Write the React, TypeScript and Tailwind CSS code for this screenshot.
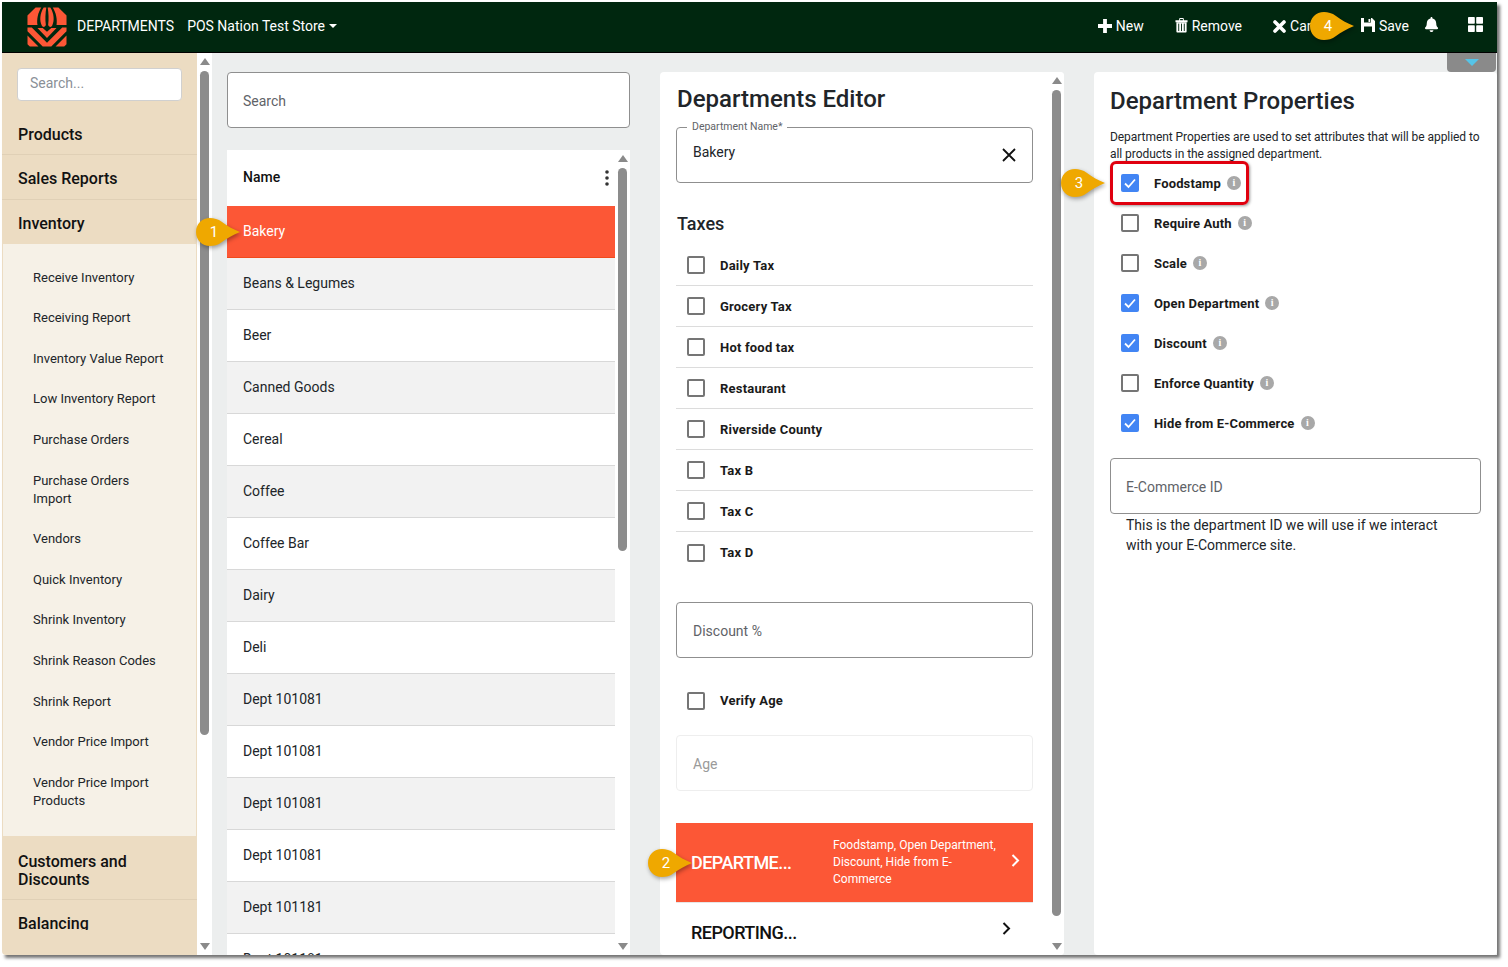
import React from "react";
import { FaBell } from "react-icons/fa";

function Logo() {
  return (
    <svg width="40" height="40" viewBox="0 0 42 42" className="shrink-0">
      <g fill="#fc5736">
        <path d="M9 0.500 L15 0.500 C11.500 6 10 13 11 19 L0.500 19 L0.500 9 Z" />
        <path d="M33 0.500 L27 0.500 C30.500 6 32 13 31 19 L41.500 19 L41.500 9 Z" />
        <path d="M17.500 0.500 C13.500 7 13 14 15.500 19.500 C17 22 19 21 19.800 19 C19 13 19.300 6 20.300 0.500 Z" />
        <path d="M24.500 0.500 C28.500 7 29 14 26.500 19.500 C25 22 23 21 22.200 19 C23 13 22.700 6 21.700 0.500 Z" />
        <path d="M11 22 L16.500 22 L21 26 L25.500 22 L31 22 L21 32.500 Z" />
        <path d="M0.500 21.500 L5 21.500 L21 37.500 L37 21.500 L41.500 21.500 L41.500 25.500 L25.500 41.500 L16.500 41.500 L0.500 25.500 Z" />
        <path d="M0.500 30 L12 41.500 L3 41.500 L0.500 39 Z" />
        <path d="M41.500 30 L30 41.500 L39 41.500 L41.500 39 Z" />
      </g>
    </svg>
  );
}

function PlusIcon() {
  return (
    <svg width="14" height="14" viewBox="0 0 14 14" className="shrink-0">
      <path d="M7 0 V14 M0 7 H14" stroke="#fff" strokeWidth="3.800" />
    </svg>
  );
}

function TimesIcon() {
  return (
    <svg width="13" height="13" viewBox="0 0 13 13" className="shrink-0">
      <path d="M2 2 L11 11 M11 2 L2 11" stroke="#fff" strokeWidth="3.600" strokeLinecap="round" />
    </svg>
  );
}

function TrashIcon() {
  return (
    <svg width="13" height="16" viewBox="0 0 14 16" className="shrink-0 -mt-[3px]">
      <path d="M0.500 3 H13.500 V5 H0.500 Z M4.500 3 V1.500 Q4.500 0.500 5.500 0.500 H8.500 Q9.500 0.500 9.500 1.500 V3 H8.500 V1.500 H5.500 V3 Z" fill="#fff" />
      <path d="M1.500 5 H12.500 V15 Q12.500 16 11.500 16 H2.500 Q1.500 16 1.500 15 Z" fill="#fff" />
      <path d="M4 6.500 V14.500 M7 6.500 V14.500 M10 6.500 V14.500" stroke="#00270f" strokeWidth="1" />
    </svg>
  );
}

function SaveIcon() {
  return (
    <svg width="14" height="14" viewBox="0 0 14 14" className="shrink-0 -mt-[3px]">
      <path fillRule="evenodd" d="M0 0 H11 L14 3 V14 H0 Z M3 0 V4.500 H10 V0 Z M3 8.500 V14 H11 V8.500 Z" fill="#fff" />
      <rect x="7.500" y="1" width="1.800" height="3" fill="#fff" />
    </svg>
  );
}

function GridIcon() {
  return (
    <svg width="15" height="15" viewBox="0 0 15 15" className="shrink-0">
      <rect x="0" y="0" width="6.800" height="6.800" rx="0.800" fill="#fff" />
      <rect x="8.200" y="0" width="6.800" height="6.800" rx="0.800" fill="#fff" />
      <rect x="0" y="8.200" width="6.800" height="6.800" rx="0.800" fill="#fff" />
      <rect x="8.200" y="8.200" width="6.800" height="6.800" rx="0.800" fill="#fff" />
    </svg>
  );
}

function Callout({ n, className }: { n: number; className: string }) {
  return (
    <div className={`absolute w-[46px] h-[30px] ${className}`}>
      <svg width="46" height="30" viewBox="0 0 46 30" className="absolute left-0 top-0 drop-shadow-[1px_2px_2px_rgba(0,0,0,0.35)]">
        <path d="M15 1 C19 1 23 2 27 5 C32 9 38 12 45 15 C38 18 32 21 27 25 C23 28 19 29 15 29 C7 29 1 23 1 15 C1 7 7 1 15 1 Z" fill="#efa800" />
      </svg>
      <span className="absolute left-0 top-0 w-[38px] h-[30px] flex items-center justify-center text-white text-[15px] leading-none">{n}</span>
    </div>
  );
}

function Box({ checked }: { checked?: boolean }) {
  return checked ? (
    <span className="w-[18px] h-[18px] rounded-[2px] bg-[#4285f4] flex items-center justify-center shrink-0">
      <svg width="14" height="14" viewBox="0 0 14 14">
        <path d="M2 7.500 L5.500 11 L12 3.500" fill="none" stroke="#fff" strokeWidth="1.800" />
      </svg>
    </span>
  ) : (
    <span className="w-[18px] h-[18px] rounded-[2px] border-2 border-[#757575] bg-white shrink-0" />
  );
}

function Info() {
  return (
    <span className="w-[14px] h-[14px] rounded-full bg-[#a8a8a8] text-white text-[10px] font-bold leading-none flex items-center justify-center shrink-0" style={{ fontFamily: "'Liberation Serif', serif" }}>i</span>
  );
}

function Check({ label, checked, info }: { label: string; checked?: boolean; info?: boolean }) {
  return (
    <div className="flex items-center h-[40px] pl-[11px]">
      <Box checked={checked} />
      <span className="ml-[15px] mt-[2px] text-[13px] font-bold tracking-[0.15px] text-[#1a1a1a]">{label}</span>
      {info && <span className="ml-[6px]"><Info /></span>}
    </div>
  );
}

function TaxRow({ label, last }: { label: string; last?: boolean }) {
  return (
    <div className={`flex items-center h-[41px] pl-[11px] ${last ? "" : "border-b border-[#dcdcdc]"}`}>
      <Box />
      <span className={`ml-[15px] text-[13px] font-bold tracking-[0.2px] text-[#1a1a1a] ${last ? "" : "mt-[2px]"}`}>{label}</span>
    </div>
  );
}

function Field({ text, className = "" }: { text: string; className?: string }) {
  return (
    <div className={`h-[56px] rounded-[4px] border border-[#8f8f8f] bg-white flex items-center text-[14px] text-[#5f6368] ${className}`}>{text}</div>
  );
}

function Scroll({ thumb, className = "" }: { thumb: string; className?: string }) {
  return (
    <div className={`w-[15px] shrink-0 bg-white flex flex-col items-center ${className}`}>
      <svg width="10" height="7" viewBox="0 0 10 7" className="mt-[5px] shrink-0"><path d="M5 0 L10 7 H0 Z" fill="#8a8a8a" /></svg>
      <div className={`w-[9px] rounded-full bg-[#8c8c8c] mt-[6px] ${thumb}`} />
      <div className="flex-1" />
      <svg width="10" height="7" viewBox="0 0 10 7" className="mb-[5px] shrink-0"><path d="M0 0 H10 L5 7 Z" fill="#8a8a8a" /></svg>
    </div>
  );
}

const subItems: { t: React.ReactNode; h: string }[] = [
  { t: "Receive Inventory", h: "h-[40.6px]" },
  { t: "Receiving Report", h: "h-[40.6px]" },
  { t: "Inventory Value Report", h: "h-[40.6px]" },
  { t: "Low Inventory Report", h: "h-[40.6px]" },
  { t: "Purchase Orders", h: "h-[40.6px]" },
  { t: <>Purchase Orders<br />Import</>, h: "h-[58.6px]" },
  { t: "Vendors", h: "h-[40.6px]" },
  { t: "Quick Inventory", h: "h-[40.6px]" },
  { t: "Shrink Inventory", h: "h-[40.6px]" },
  { t: "Shrink Reason Codes", h: "h-[40.6px]" },
  { t: "Shrink Report", h: "h-[40.6px]" },
  { t: "Vendor Price Import", h: "h-[40.6px]" },
  { t: <>Vendor Price Import<br />Products</>, h: "h-[58.6px]" },
];

const rows = ["Bakery", "Beans & Legumes", "Beer", "Canned Goods", "Cereal", "Coffee", "Coffee Bar", "Dairy", "Deli", "Dept 101081", "Dept 101081", "Dept 101081", "Dept 101081", "Dept 101181", "Dept 101181"];

export default function App() {
  return (
    <div className="relative w-[1508px] h-[967px] bg-white overflow-hidden text-[#212529]" style={{ fontFamily: "Roboto, 'Liberation Sans', sans-serif" }}>
      <div className="relative ml-[2px] mt-[2px] w-[1495px] h-[953px] flex flex-col shadow-[3px_3px_3px_rgba(0,0,0,0.55)]">
        {/* top bar */}
        <header className="h-[51px] shrink-0 bg-[#00270f] border-b border-black flex items-center pb-[2px] text-white text-[14px]">
          <div className="ml-[25px] mt-[2px]"><Logo /></div>
          <span className="ml-[10px]">DEPARTMENTS</span>
          <span className="ml-[13px]">POS Nation Test Store</span>
          <svg width="8" height="4" viewBox="0 0 8 4" className="ml-[4px]"><path d="M0 0 H8 L4 4 Z" fill="#fff" /></svg>
          <div className="flex-1" />
          <span className="flex items-center gap-[4px]"><PlusIcon />New</span>
          <span className="flex items-center gap-[4px] ml-[31px]"><TrashIcon />Remove</span>
          <span className="flex items-center gap-[4px] ml-[31px] w-[70px] overflow-hidden"><TimesIcon />Cancel</span>
          <span className="flex items-center gap-[4px] ml-[18px]"><SaveIcon />Save</span>
          <span className="ml-[15px] -mt-[3px]"><FaBell size={15} /></span>
          <span className="ml-[29px] mr-[14px] -mt-[3px]"><GridIcon /></span>
        </header>

        <div className="flex-1 min-h-0 flex">
          {/* sidebar */}
          <aside className="w-[195px] shrink-0 bg-[#ecdcc2] overflow-hidden flex flex-col rounded-bl-[4px]">
            <div className="h-[59px] shrink-0 pl-[15px] pt-[15px]">
              <div className="w-[165px] h-[33px] rounded-[4px] bg-white border border-[#d0d0d0] flex items-center pl-[12px] pb-[2px] text-[14px] text-[#8a9097]">Search...</div>
            </div>
            <div className="h-[43px] shrink-0 pl-[16px] pt-[4px] flex items-center text-[16px] font-medium text-[#111] border-b border-[#e0d0b6]">Products</div>
            <div className="h-[45px] shrink-0 pl-[16px] pt-[4px] flex items-center text-[16px] font-medium text-[#111] border-b border-[#e0d0b6]">Sales Reports</div>
            <div className="h-[44px] shrink-0 pl-[16px] pt-[4px] flex items-center text-[16px] font-medium text-[#111]">Inventory</div>
            <div className="h-[593px] shrink-0 bg-[#f6f1e7] border-x border-[#ecdcc2] border-b pl-[30px] pt-[13.6px]">
              {subItems.map((s, i) => (
                <div key={i} className={`${s.h} text-[13px] leading-[18.5px] text-[#212529] pt-[11px]`}>{s.t}</div>
              ))}
            </div>
            <div className="h-[63px] shrink-0 pl-[16px] pt-[6px] flex items-center text-[16px] leading-[18px] font-medium text-[#111] border-b border-[#e0d0b6]">
              <span>Customers and<br />Discounts</span>
            </div>
            <div className="mt-[12px] ml-[16px] h-[18px] overflow-hidden text-[16px] leading-[24px] font-medium text-[#111]">Balancing</div>
          </aside>
          <Scroll thumb="h-[664px]" />

          {/* content */}
          <main className="flex-1 min-w-0 bg-[#eceeee] flex relative">
            {/* list column */}
            <section className="w-[403px] ml-[15px] mt-[19px] flex flex-col shrink-0">
              <Field text="Search" className="pl-[15px] pt-[2px]" />
              <div className="mt-[22px] flex-1 min-h-0 flex bg-white">
                <div className="flex-1 min-w-0 overflow-hidden">
                  <div className="h-[56px] flex items-center justify-between pl-[16px] pr-[6px] text-[14px] font-medium text-[#111]">
                    <span className="-mt-[2px]">Name</span>
                    <svg width="4" height="16" viewBox="0 0 4 16"><circle cx="2" cy="2" r="1.800" fill="#333" /><circle cx="2" cy="8" r="1.800" fill="#333" /><circle cx="2" cy="14" r="1.800" fill="#333" /></svg>
                  </div>
                  {rows.map((r, i) => (
                    <div key={i} className={`h-[52px] flex items-center pl-[16px] text-[14px] border-b ${i === 0 ? "bg-[#fc5736] text-white border-[#f04a1c]" : i % 2 === 1 ? "bg-[#f2f2f2] border-[#d8d8d8]" : "bg-white border-[#d8d8d8]"}`}>{r}</div>
                  ))}
                </div>
                <Scroll thumb="h-[383px]" />
              </div>
            </section>

            {/* editor */}
            <section className="w-[404px] ml-[30px] mt-[19px] bg-white rounded-[4px] flex shrink-0 overflow-hidden">
              <div className="flex-1 min-w-0 pl-[16px] pr-[16px] overflow-hidden">
                <h1 className="ml-[1px] text-[24px] leading-[28px] font-medium mt-[13px] text-[#212529]">Departments Editor</h1>
                <div className="relative h-[56px] mt-[14px] rounded-[4px] border border-[#8f8f8f] flex items-start pl-[16px] pt-[14px] text-[14px]">
                  <span className="absolute left-[10px] -top-[7px] bg-white px-[5px] text-[10.5px] leading-[12px] text-[#5f6368]">Department Name*</span>
                  <span>Bakery</span>
                  <svg width="14" height="14" viewBox="0 0 14 14" className="absolute right-[16px] top-[20px]"><path d="M1 1 L13 13 M13 1 L1 13" stroke="#111" strokeWidth="1.800" /></svg>
                </div>
                <h2 className="ml-[1px] text-[18px] leading-[22px] font-medium mt-[30px] mb-[10px] text-[#212529]">Taxes</h2>
                <TaxRow label="Daily Tax" />
                <TaxRow label="Grocery Tax" />
                <TaxRow label="Hot food tax" />
                <TaxRow label="Restaurant" />
                <TaxRow label="Riverside County" />
                <TaxRow label="Tax B" />
                <TaxRow label="Tax C" />
                <TaxRow label="Tax D" last />
                <Field text="Discount %" className="mt-[29px] pl-[16px] pt-[2px]" />
                <div className="mt-[22px]"><TaxRow label="Verify Age" last /></div>
                <div className="h-[56px] mt-[14px] rounded-[4px] border border-[#eeeeee] flex items-center pl-[16px] pt-[2px] text-[14px] text-[#9a9a9a]">Age</div>
                <div className="h-[79px] mt-[32px] bg-[#fc5736] flex items-center text-white pl-[15px]">
                  <span className="w-[142px] text-[18px] font-medium tracking-[-0.55px] -mt-[1px]">DEPARTME...</span>
                  <span className="w-[172px] text-[12px] leading-[17px]">Foodstamp, Open Department, Discount, Hide from E-Commerce</span>
                  <svg width="9" height="13" viewBox="0 0 9 13" className="ml-[6px] -mt-[5px]"><path d="M1.500 1 L7 6.500 L1.500 12" fill="none" stroke="#fff" strokeWidth="2" /></svg>
                </div>
                <div className="flex items-center h-[60px] pl-[15px] border-t border-[#e6e6e6]">
                  <span className="w-[311px] text-[18px] font-medium tracking-[-0.55px] text-[#111]">REPORTING...</span>
                  <svg width="9" height="13" viewBox="0 0 9 13" className="-mt-[8px]"><path d="M1.500 1 L7 6.500 L1.500 12" fill="none" stroke="#111" strokeWidth="2" /></svg>
                </div>
              </div>
              <Scroll thumb="h-[826px]" />
            </section>

            {/* properties */}
            <section className="flex-1 min-w-0 ml-[30px] mt-[19px] bg-white rounded-[4px] pl-[16px] pr-[16px]">
              <h1 className="text-[24px] leading-[28px] font-medium mt-[15px] text-[#212529]">Department Properties</h1>
              <p className="text-[12px] leading-[17px] mt-[14px] tracking-[-0.06px] text-[#212529]">Department Properties are used to set attributes that will be applied to all products in the assigned department.</p>
              <div>
                <Check label="Foodstamp" checked info />
                <Check label="Require Auth" info />
                <Check label="Scale" info />
                <Check label="Open Department" checked info />
                <Check label="Discount" checked info />
                <Check label="Enforce Quantity" info />
                <Check label="Hide from E-Commerce" checked info />
              </div>
              <Field text="E-Commerce ID" className="mt-[15px] pl-[15px] pt-[2px]" />
              <p className="ml-[16px] w-[330px] text-[14px] leading-[20px] mt-[1px] text-[#212529]">This is the department ID we will use if we interact with your E-Commerce site.</p>
            </section>

            <div className="absolute right-[1px] top-0 w-[49px] h-[19px] bg-[#8a8a8a] rounded-b-[4px] flex justify-center pt-[6px]">
              <svg width="14" height="7" viewBox="0 0 14 7"><path d="M0 0 H14 L7 7 Z" fill="#55c4e8" /></svg>
            </div>
          </main>
        </div>
      </div>

      {/* annotations */}
      <div className="absolute left-[1110px] top-[161px] w-[139px] h-[44px] rounded-[6px] border-[3px] border-[#e0000f] shadow-[1px_1px_3px_rgba(0,0,0,0.4)]" />
      <Callout n={1} className="left-[195px] top-[217px]" />
      <Callout n={2} className="left-[647px] top-[848px]" />
      <Callout n={3} className="left-[1060px] top-[168px]" />
      <Callout n={4} className="left-[1309px] top-[11px]" />
    </div>
  );
}
